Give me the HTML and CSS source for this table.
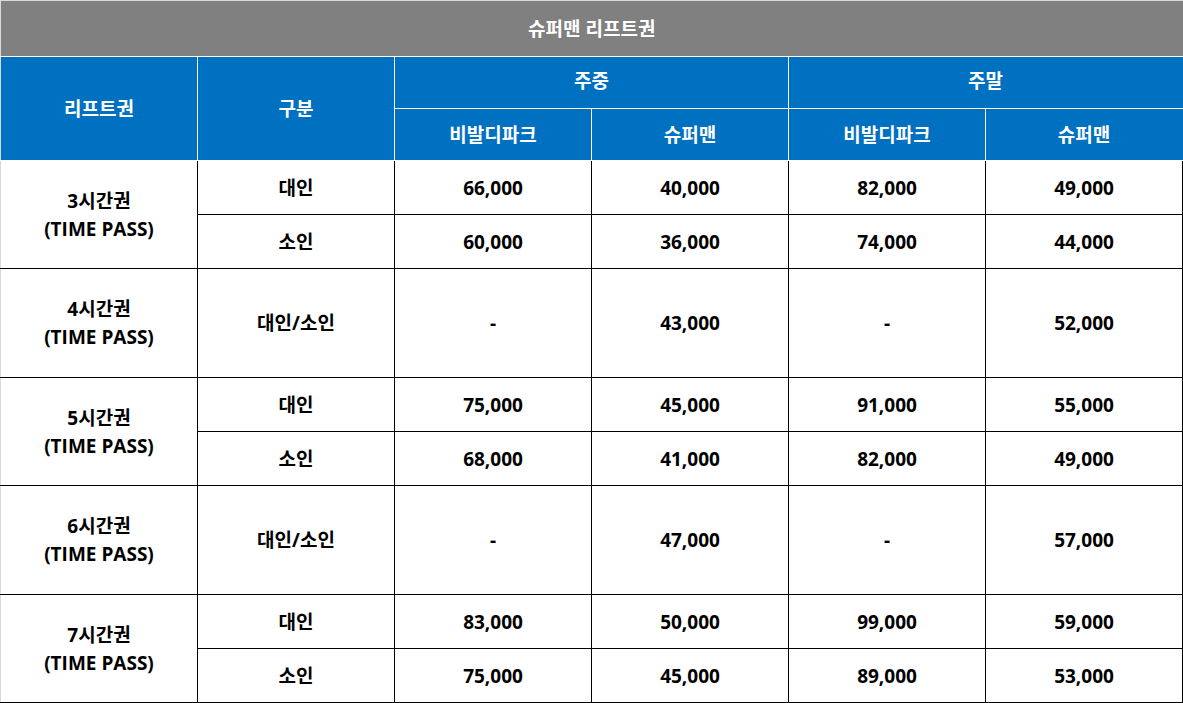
FILE: index.html
```html
<!DOCTYPE html>
<html lang="ko">
<head>
<meta charset="utf-8">
<title>슈퍼맨 리프트권</title>
<link rel="stylesheet" href="styles.css">
</head>
<body>
<table class="price">
  <colgroup>
    <col class="c"><col class="c"><col class="c"><col class="c"><col class="c"><col class="c">
  </colgroup>
  <thead>
    <tr class="title-row"><th colspan="6" class="title">슈퍼맨 리프트권</th></tr>
    <tr class="head1">
      <th rowspan="2" class="hd">리프트권</th>
      <th rowspan="2" class="hd">구분</th>
      <th colspan="2" class="hd">주중</th>
      <th colspan="2" class="hd">주말</th>
    </tr>
    <tr class="head2">
      <th class="hd">비발디파크</th>
      <th class="hd">슈퍼맨</th>
      <th class="hd">비발디파크</th>
      <th class="hd">슈퍼맨</th>
    </tr>
  </thead>
  <tbody>
    <tr class="r">
      <td rowspan="2" class="name">3시간권<br>(TIME PASS)</td>
      <td>대인</td><td>66,000</td><td>40,000</td><td>82,000</td><td>49,000</td>
    </tr>
    <tr class="r">
      <td>소인</td><td>60,000</td><td>36,000</td><td>74,000</td><td>44,000</td>
    </tr>
    <tr class="rr">
      <td class="name">4시간권<br>(TIME PASS)</td>
      <td>대인/소인</td><td>-</td><td>43,000</td><td>-</td><td>52,000</td>
    </tr>
    <tr class="r">
      <td rowspan="2" class="name">5시간권<br>(TIME PASS)</td>
      <td>대인</td><td>75,000</td><td>45,000</td><td>91,000</td><td>55,000</td>
    </tr>
    <tr class="r">
      <td>소인</td><td>68,000</td><td>41,000</td><td>82,000</td><td>49,000</td>
    </tr>
    <tr class="rr">
      <td class="name">6시간권<br>(TIME PASS)</td>
      <td>대인/소인</td><td>-</td><td>47,000</td><td>-</td><td>57,000</td>
    </tr>
    <tr class="r">
      <td rowspan="2" class="name">7시간권<br>(TIME PASS)</td>
      <td>대인</td><td>83,000</td><td>50,000</td><td>99,000</td><td>59,000</td>
    </tr>
    <tr class="r">
      <td>소인</td><td>75,000</td><td>45,000</td><td>89,000</td><td>53,000</td>
    </tr>
  </tbody>
</table>
</body>
</html>
```
FILE: styles.css
```css
html, body {
  margin: 0;
  padding: 0;
  background: #ffffff;
}
body {
  font-family: "Open Sans", "Noto Sans CJK KR", sans-serif;
  font-weight: 700;
  font-size: 19px;
  color: #000;
}
.price {
  border-collapse: collapse;
  table-layout: fixed;
  width: 1183px;
  border-top: 1px solid #d9d9d9;
  border-left: 1px solid #d9d9d9;
}
.c { width: 197px; }
.price th, .price td {
  padding: 0;
  text-align: center;
  vertical-align: middle;
  line-height: 28px;
  font-weight: 700;
}
.title {
  background: #808080;
  color: #fff;
  border-bottom: 1px solid #fff;
}
.title-row th { height: 55px; }
.hd {
  background: #0070c0;
  color: #fff;
  border: 1px solid #fff;
}
.head1 .hd { height: 47px; padding-bottom: 4px; }
.head1 th[rowspan] { padding-bottom: 0; }
.head2 .hd { height: 51px; }
.head1 th:first-child { border-left: 0; }
.head1 th:last-child, .head2 th:last-child { border-right: 1px solid #0070c0; }
.price tbody td {
  border: 1px solid #000;
  background: #fff;
}
.price tbody td:first-child { border-left: 1px solid #d9d9d9; }
.r td { height: 53px; }
.rr td { height: 108px; }
```
